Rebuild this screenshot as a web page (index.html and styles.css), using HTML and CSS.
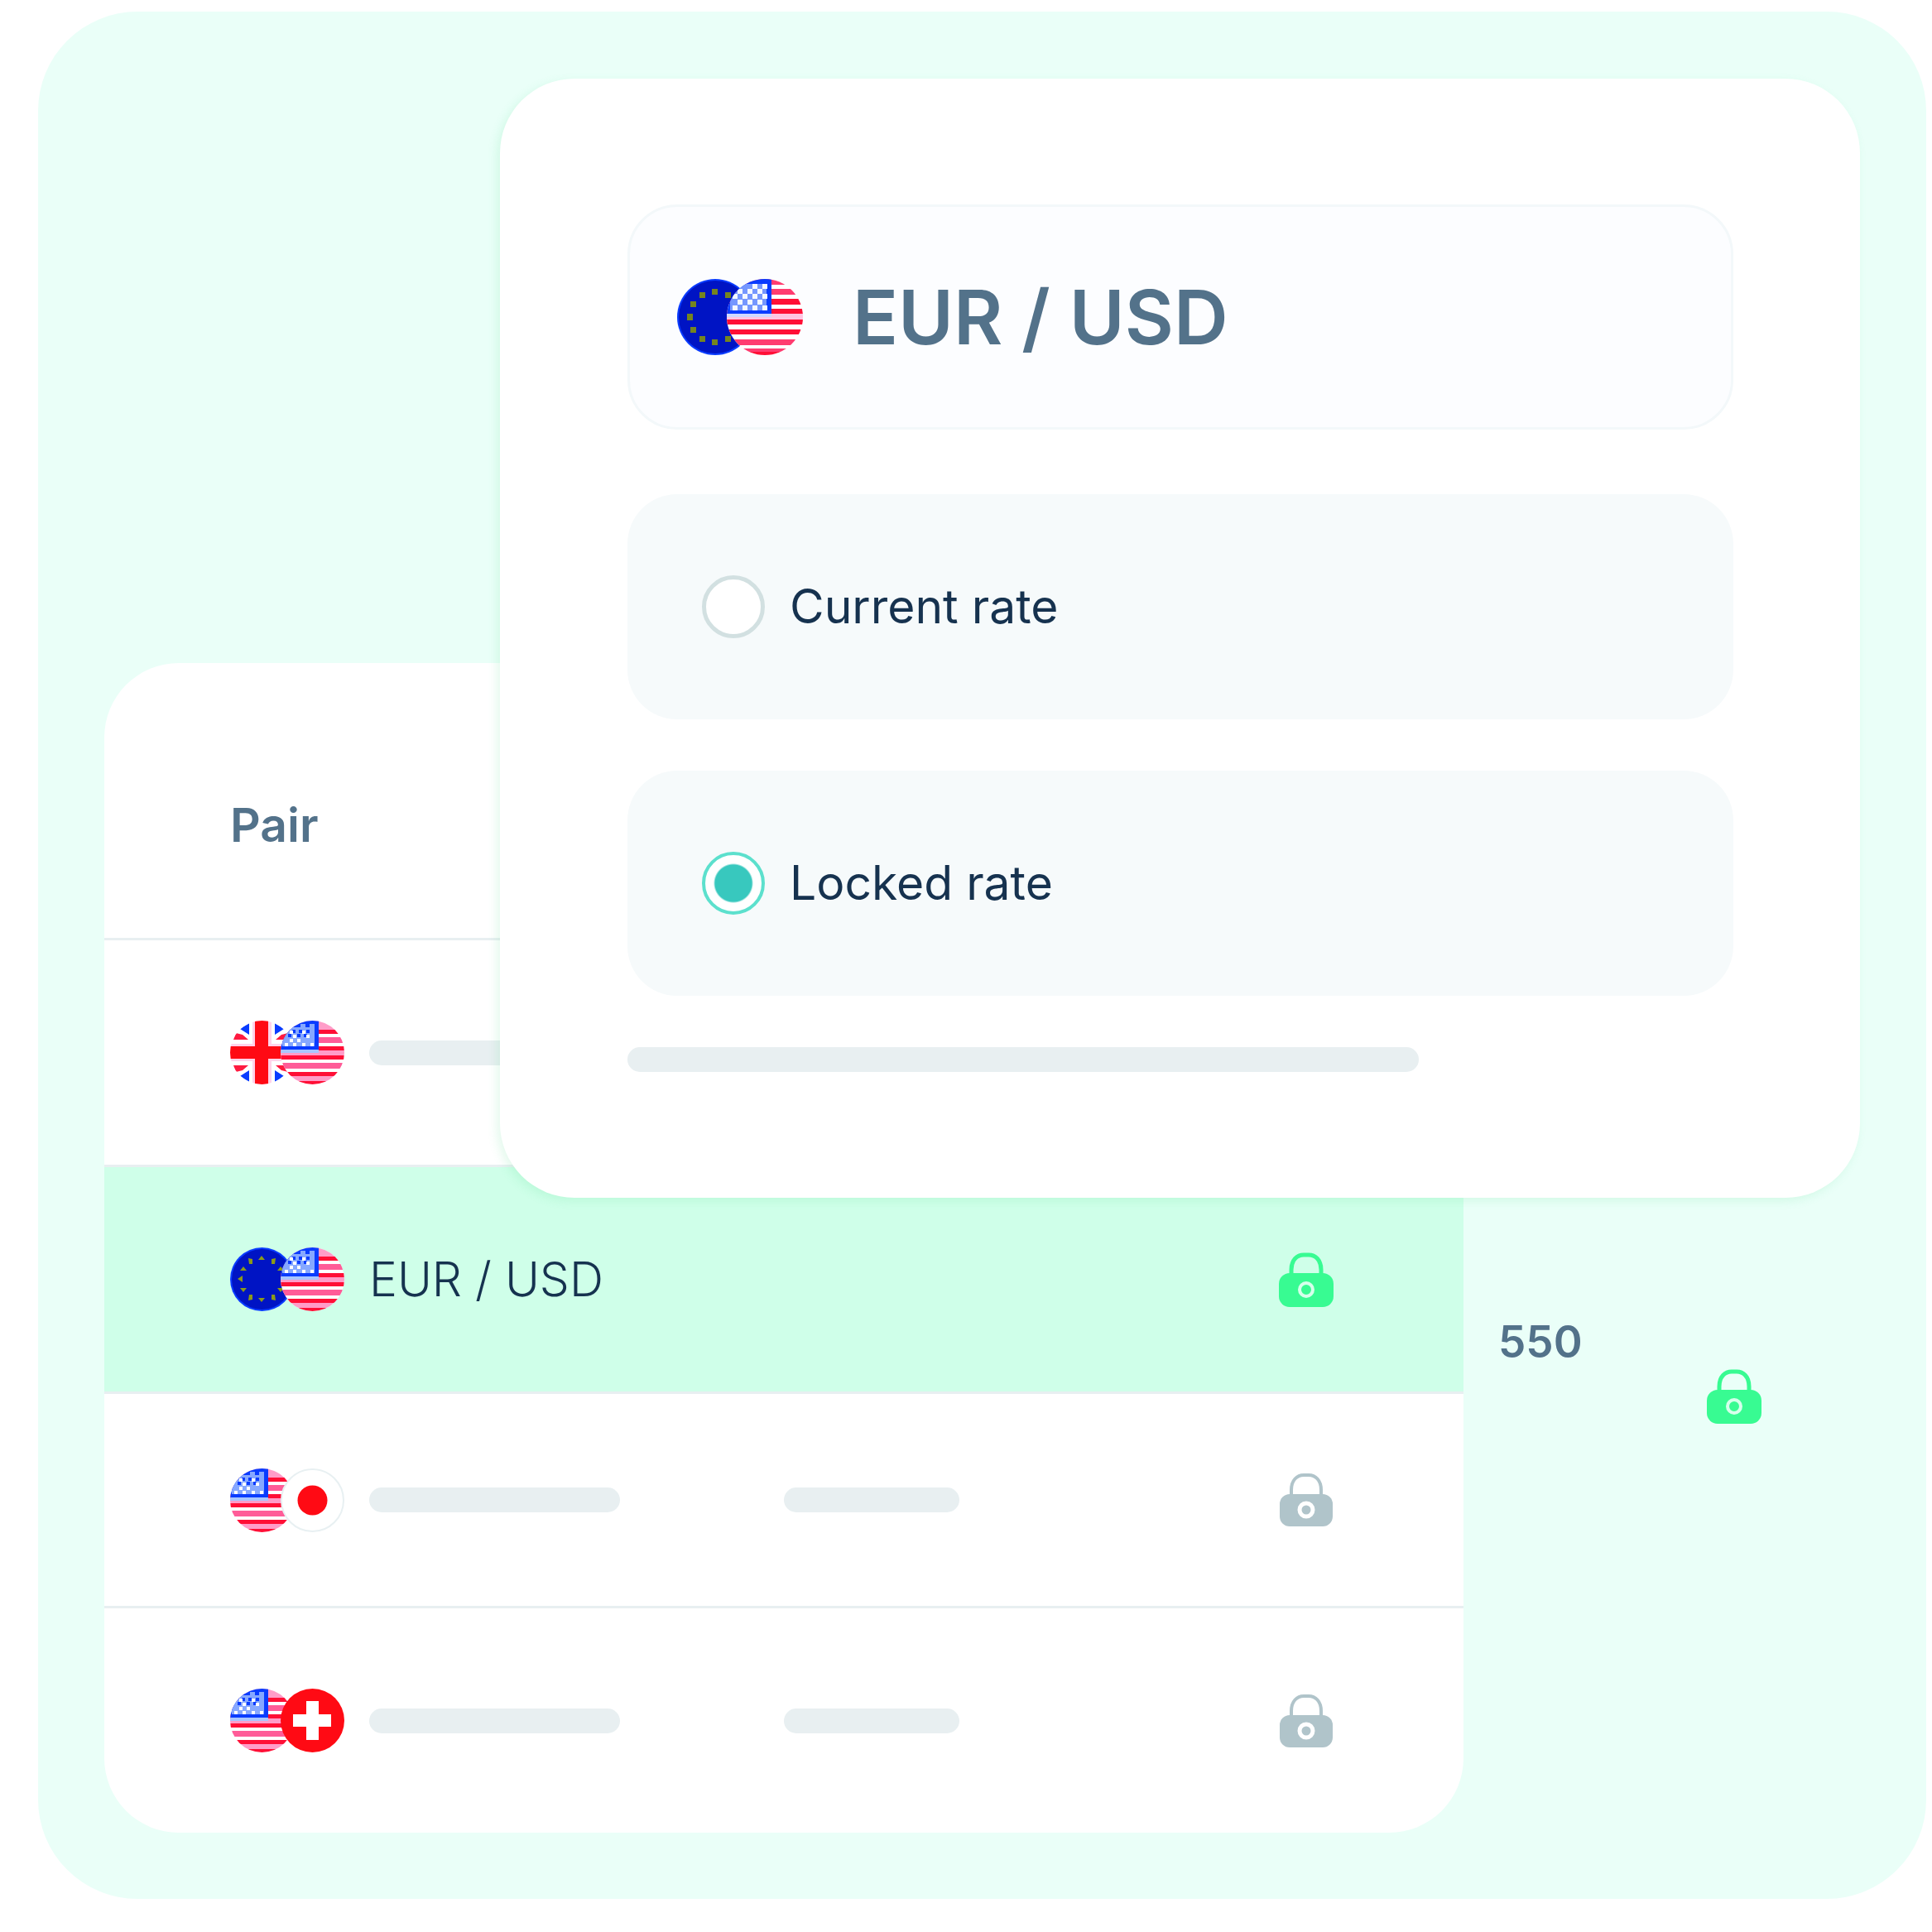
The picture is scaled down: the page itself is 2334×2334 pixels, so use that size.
FILE: index.html
```html
<!DOCTYPE html>
<html lang="en">
<head>
<meta charset="utf-8">
<meta name="viewport" content="width=device-width, initial-scale=1">
<title>Currency pair rates</title>
<link rel="stylesheet" href="styles.css">
</head>
<body>
<svg class="sprite" aria-hidden="true">
  <defs>
    <clipPath id="round"><circle cx="46" cy="46" r="46"/></clipPath>
    <clipPath id="round-sm"><circle cx="38.500" cy="38.500" r="38.500"/></clipPath>
  </defs>
  <symbol id="us-lg" viewBox="0 0 92 92">
    <g clip-path="url(#round)">
      <rect width="92" height="92" fill="#fff"/>
      <path fill="#ff3c70" d="M0 0h92v7H0zM0 12h92v7H0zM0 73h92v7H0zM0 84h92v4H0z"/>
      <path fill="#ff0f36" d="M0 24h92v7H0zM0 36h92v6H0zM0 49h92v6H0zM0 61h92v6H0zM0 88h92v4H0z"/>
      <path fill="#ffc4e2" d="M0 42h92v7H0z"/>
      <path fill="#cfd8ff" d="M0 42h54v4H0z"/>
      <path fill="#0a3cff" d="M0 0h54v42H0z"/>
      <path fill="#7597ff" d="M4 6h44v32H4z"/>
      <path fill="none" stroke="#f4f8ff" stroke-width="6" stroke-dasharray="6 6" d="M31 9h18M13 15h36M7 21h42M13 28h36M7 35h42"/>
    </g>
  </symbol>
  <symbol id="us" viewBox="0 0 77 77">
    <g clip-path="url(#round-sm)">
      <rect width="77" height="77" fill="#fff"/>
      <path fill="#ff9cc8" d="M0 0h77v11H0zM0 36h77v6H0zM0 67h77v6H0z"/>
      <path fill="#ff0f36" d="M0 11h77v5H0zM0 31h77v5H0zM0 42h77v5H0zM0 62h77v5H0zM0 73h77v4H0z"/>
      <path fill="#ff5c98" d="M0 20h77v7H0zM0 51h77v7H0z"/>
      <path fill="#a9c6ff" d="M0 34h46v5H0z"/>
      <path fill="#0a3cff" d="M0 0h46v35H0z"/>
      <path fill="#86a8ff" d="M2 8h39v23H2zM24 4h6v5h-6zM35 4h6v8h-6z"/>
      <path fill="#0a3cff" d="M14 11h4v4h-4zM22 11h4v4h-4zM31 11h4v4h-4zM9 16h4v4H9zM20 16h4v4h-4zM28 16h4v4h-4z"/>
      <path fill="#fff" d="M11 12h4v4h-4zM26 12h4v4h-4zM15 17h4v4h-4zM31 17h4v4h-4zM5 27h4v4H5zM15 27h4v4h-4zM26 27h4v4h-4zM36 27h4v4h-4zM11 22h4v4h-4zM20 22h4v4h-4z"/>
    </g>
  </symbol>
  <symbol id="eu" viewBox="0 0 92 92">
    <circle cx="46" cy="46" r="46" fill="#0a3cff"/>
    <circle cx="46" cy="46" r="44" fill="#0014c4"/>
    <g fill="#75851f">
      <path d="M42 12h7v7h-7zM42 73h7v7h-7zM12 42h7v8h-7zM73 42h7v8h-7zM27 16h7v7h-7zM58 16h7v7h-7zM27 69h7v7h-7zM58 69h7v7h-7zM16 27h7v7h-7zM69 27h7v7h-7zM16 58h7v7h-7zM69 58h7v7h-7z"/>
    </g>
  </symbol>
  <symbol id="eu-sm" viewBox="0 0 77 77">
    <circle cx="38.500" cy="38.500" r="38.500" fill="#0a3cff"/>
    <circle cx="38.500" cy="38.500" r="36.500" fill="#0014c4"/>
    <path fill="#8c9a18" d="M38 10l4 5h-8zM38 66l4-5h-8zM9 38l6-4v8zM68 38l-6-4v8zM22 13l5 1v6h-4zM55 13l-5 1v6h4zM22 64l5-1v-6h-4zM55 64l-5-1v-6h4zM16 23l4 5h-8zM61 23l4 5h-8zM16 54l4-5h-8zM61 54l4-5h-8z"/>
  </symbol>
  <symbol id="gb" viewBox="0 0 77 77">
    <g clip-path="url(#round-sm)">
      <rect width="77" height="77" fill="#fff"/>
      <path fill="#0a3cff" d="M12 10L23 3v14zM65 10L54 3v14zM12 67l11 7V60zM65 67l-11 7V60z"/>
      <path fill="#ff1a40" d="M4 23l3-8 8 2 7 6zM73 23l-3-8-8 2-7 6zM4 54l3 8 8-2 7-6zM73 54l-3 8-8-2-7-6z"/>
      <path fill="#ffd3ea" d="M27 0h23v77H27zM0 28h77v21H0z"/>
      <path fill="#ff0a14" d="M30 0h16v77H30zM0 31h77v15H0z"/>
    </g>
  </symbol>
  <symbol id="jp" viewBox="0 0 77 77">
    <circle cx="38.500" cy="38.500" r="37.500" fill="#fff" stroke="#e8f0f2" stroke-width="2"/>
    <circle cx="38.500" cy="38.500" r="18" fill="#ff0a14"/>
  </symbol>
  <symbol id="ch" viewBox="0 0 77 77">
    <circle cx="38.500" cy="38.500" r="38.500" fill="#ff0a14"/>
    <path fill="#fff" d="M31 15h15v16h15v15H46v16H31V46H15V31h16z"/>
  </symbol>
  <symbol id="lock" viewBox="0 0 66 68">
    <path fill="none" stroke="currentColor" stroke-width="5" d="M15 29v-7C15 10 22 4 30 4h6c8 0 15 6 15 18v7"/>
    <rect y="26" width="66" height="41" rx="13" fill="currentColor"/>
    <circle cx="33" cy="46" r="8" fill="none" stroke="#d6ffeb" stroke-width="4"/>
  </symbol>
  <symbol id="lock-off" viewBox="0 0 66 68">
    <path fill="none" stroke="currentColor" stroke-width="4" d="M15 29v-7C15 10 22 4 30 4h6c8 0 15 6 15 18v7"/>
    <rect x="1" y="27" width="64" height="39" rx="12" fill="currentColor"/>
    <circle cx="33" cy="46" r="8" fill="none" stroke="#fff" stroke-width="5"/>
  </symbol>
</svg>

<main class="panel">
  <section class="pairs">
    <table class="pairs-table">
      <colgroup>
        <col class="col-pair">
        <col class="col-rate">
        <col class="col-lock">
      </colgroup>
      <thead>
        <tr class="head-row"><th scope="col">Pair</th><td></td><td></td></tr>
      </thead>
      <tbody>
        <tr class="row">
          <td><div class="pair"><span class="flags"><svg class="flag"><use href="#gb"/></svg><svg class="flag"><use href="#us"/></svg></span><span class="bar bar-name"></span></div></td>
          <td></td>
          <td></td>
        </tr>
        <tr class="row row-active">
          <td><div class="pair"><span class="flags"><svg class="flag"><use href="#eu-sm"/></svg><svg class="flag"><use href="#us"/></svg></span><span>EUR / USD</span></div></td>
          <td></td>
          <td><svg class="lock lock-on" role="img" aria-label="Locked"><use href="#lock"/></svg></td>
        </tr>
        <tr class="row row-short">
          <td><div class="pair"><span class="flags"><svg class="flag"><use href="#us"/></svg><svg class="flag"><use href="#jp"/></svg></span><span class="bar bar-name"></span></div></td>
          <td><div class="bar bar-rate"></div></td>
          <td><svg class="lock" role="img" aria-label="Not locked"><use href="#lock-off"/></svg></td>
        </tr>
        <tr class="row">
          <td><div class="pair"><span class="flags"><svg class="flag"><use href="#us"/></svg><svg class="flag"><use href="#ch"/></svg></span><span class="bar bar-name"></span></div></td>
          <td><div class="bar bar-rate"></div></td>
          <td><svg class="lock" role="img" aria-label="Not locked"><use href="#lock-off"/></svg></td>
        </tr>
      </tbody>
    </table>
  </section>

  <aside class="side">
    <span class="amount">550</span>
    <svg class="lock lock-on" role="img" aria-label="Locked"><use href="#lock"/></svg>
  </aside>

  <form class="dialog">
    <div class="selected">
      <span class="flags flags-lg"><svg class="flag"><use href="#eu"/></svg><svg class="flag"><use href="#us-lg"/></svg></span>
      <span>EUR / USD</span>
    </div>
    <div class="options">
      <label class="option"><input class="radio" type="radio" name="rate" value="current"><span>Current rate</span></label>
      <label class="option"><input class="radio" type="radio" name="rate" value="locked" checked><span>Locked rate</span></label>
    </div>
    <div class="bar bar-note"></div>
  </form>
</main>
</body>
</html>
```
FILE: styles.css
```css
* {
  box-sizing: border-box;
}

body {
  margin: 0;
  padding: 14px 7px 40px 46px;
  background: #fff;
  color: #16324f;
  font-family: Inter, "Liberation Sans", sans-serif;
  font-size: 57px;
  line-height: 64px;
}

svg {
  display: block;
}

.sprite {
  position: absolute;
  width: 0;
  height: 0;
}

.panel {
  position: relative;
  display: grid;
  grid-template-columns: minmax(0, 1fr) 479px;
  padding: 787px 80px 80px;
  border-radius: 120px;
  background: #eafff8;
}

/* Pairs table */
.pairs {
  overflow: hidden;
  border-radius: 90px;
  background: #fff;
}

.pairs-table {
  width: 100%;
  table-layout: fixed;
  border-spacing: 0;
}

.col-pair {
  width: 50%;
}

.pairs-table th,
.pairs-table td {
  padding: 0;
  text-align: left;
}

.pairs-table th:first-child,
.pairs-table td:first-child {
  padding-left: 152px;
}

.head-row {
  height: 332px;
}

.head-row th {
  padding-top: 60px;
  color: #53728a;
  font-weight: 600;
}

.row {
  height: 274px;
}

.row-short {
  height: 259px;
}

.row td {
  border-top: 3px solid #e8eff1;
}

.row td:last-child {
  padding-right: 157px;
}

.row-active {
  background: #cfffe9;
  font-weight: 300;
}

.pair {
  display: flex;
  align-items: center;
  gap: 30px;
}

.flags {
  display: flex;
}

.flag {
  width: 77px;
  height: 77px;
}

.flag + .flag {
  margin-left: -16px;
}

.flags-lg .flag {
  width: 92px;
  height: 92px;
}

.flags-lg .flag + .flag {
  margin-left: -32px;
}

.bar {
  height: 30px;
  border-radius: 15px;
  background: #e8eff1;
}

.bar-name {
  width: 303px;
}

.bar-rate {
  width: 212px;
}

.bar-note {
  width: 956px;
  max-width: 100%;
}

.lock {
  width: 66px;
  height: 68px;
  margin-left: auto;
  color: #b0c4ca;
}

.lock-on {
  color: #38fb92;
}

/* Amount beside the table */
.side {
  display: flex;
  flex-direction: column;
  padding: 788px 119px 0 42px;
}

.amount {
  color: #53728a;
  font-size: 53px;
  font-weight: 600;
}

/* Rate dialog */
.dialog {
  position: absolute;
  top: 81px;
  right: 80px;
  left: 558px;
  padding: 152px 153px 152px 154px;
  border-radius: 90px;
  background: #fff;
  box-shadow: -4px 4px 12px rgba(90, 220, 140, 0.16);
}

.selected {
  display: flex;
  align-items: center;
  gap: 60px;
  height: 272px;
  padding-left: 57px;
  border: 3px solid #f3f8fa;
  border-radius: 60px;
  background: #fcfdff;
  color: #53728a;
  font-size: 91px;
  font-weight: 600;
}

.options {
  display: grid;
  gap: 62px;
  margin: 78px 0 62px;
}

.option {
  display: flex;
  align-items: center;
  gap: 30px;
  height: 272px;
  padding-left: 90px;
  border-radius: 60px;
  background: #f6fafb;
}

.radio {
  width: 76px;
  height: 76px;
  margin: 0;
  border: 5px solid #d2e0e1;
  border-radius: 50%;
  appearance: none;
  background: #fff;
}

.radio:checked {
  border: 4px solid #5ce0cd;
  background: radial-gradient(circle, #38c8be 22px, #fff 24px);
}
```
